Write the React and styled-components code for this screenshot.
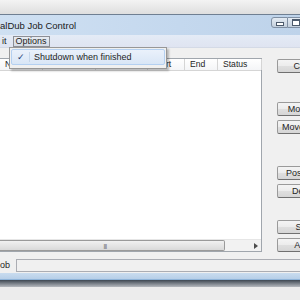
import React from 'react';
import styled, { createGlobalStyle } from 'styled-components';

const GlobalStyle = createGlobalStyle`
  html, body {
    margin: 0;
    padding: 0;
    width: 300px;
    height: 300px;
    overflow: hidden;
    background: #e9e9e9;
  }
  body {
    font-family: "Liberation Sans", Arial, sans-serif;
    font-size: 9px;
    color: #1e1e1e;
  }
`;

const columns = [
  { name: 'Name', width: 43 },
  { name: 'Source', width: 53 },
  { name: 'Dest', width: 52 },
  { name: 'Start', width: 37 },
  { name: 'End', width: 33 },
  { name: 'Status', width: 44 },
];

const buttonGroups = [
  { gap: 0, items: ['Close'] },
  { gap: 29, items: ['Move up', 'Move down'] },
  { gap: 32, items: ['Postpone', 'Delete'] },
  { gap: 22, items: ['Start', 'Abort'] },
];

const App = () => {
  return (
    <Screen>
      <GlobalStyle />
      <Backdrop />
      <Window>
        <TitleBar>
          <Title>alDub Job Control</Title>
          <CaptionButtons>
            <CaptionButton>
              <MinGlyph />
            </CaptionButton>
            <CaptionButton>
              <MaxGlyph />
            </CaptionButton>
          </CaptionButtons>
        </TitleBar>

        <MenuBar>
          <MenuItem>it</MenuItem>
          <MenuItem $open>Options</MenuItem>
          <Dropdown>
            <DropItem>
              <Check>✓</Check>
              <span>Shutdown when finished</span>
            </DropItem>
          </Dropdown>
        </MenuBar>

        <Client>
          <Main>
            <ListView>
              <Header>
                {columns.map((c) => (
                  <HeaderCell key={c.name} $w={c.width}>
                    {c.name}
                  </HeaderCell>
                ))}
              </Header>
              <ListBody />
              <HScroll>
                <Thumb>
                  <Grip>|||</Grip>
                </Thumb>
                <Arrow>
                  <svg width="4" height="6" viewBox="0 0 4 6">
                    <path d="M0 0 L4 3 L0 6 Z" fill="#4d4d4d" />
                  </svg>
                </Arrow>
              </HScroll>
            </ListView>

            <ButtonColumn>
              {buttonGroups.map((g) => (
                <ButtonGroup key={g.items[0]} $gap={g.gap}>
                  {g.items.map((label) => (
                    <PushButton key={label}>{label}</PushButton>
                  ))}
                </ButtonGroup>
              ))}
            </ButtonColumn>
          </Main>

          <StatusRow>
            <StatusLabel>ob</StatusLabel>
            <StatusField />
          </StatusRow>
        </Client>
        <BottomFrame />
      </Window>
      <Shadow />
    </Screen>
  );
};

export default App;

const Screen = styled.div`
  width: 300px;
  height: 300px;
  overflow: hidden;
  display: flex;
  flex-direction: column;
  background: #ececec;
`;

const Backdrop = styled.div`
  height: 14px;
  flex-shrink: 0;
  background: linear-gradient(#f3f3f3, #dedede);
`;

const Window = styled.div`
  display: flex;
  flex-direction: column;
  border-top: 1px solid #6f7f92;
  background: #c8dbee;
`;

const TitleBar = styled.div`
  height: 20px;
  display: flex;
  align-items: flex-start;
  overflow: hidden;
  background: linear-gradient(90deg, #cfe0f2 0%, #c4d8ee 60%, #bed3ea 100%);
`;

const Title = styled.div`
  flex: 1;
  padding-top: 5px;
  font-size: 9.5px;
  color: #1a1a1a;
  white-space: nowrap;
`;

const CaptionButtons = styled.div`
  display: flex;
  margin-top: 2px;
  margin-right: -4px;
`;

const CaptionButton = styled.div`
  width: 15px;
  height: 9px;
  border: 1px solid #7f8fa3;
  border-left-width: 0;
  background: linear-gradient(#e4ebf3, #c3cfdc);
  display: flex;
  align-items: center;
  justify-content: center;
  &:first-child {
    border-left-width: 1px;
    border-radius: 3px 0 0 3px;
  }
`;

const MinGlyph = styled.div`
  width: 6px;
  height: 2px;
  border: 1px solid #4c5a6c;
  background: #fff;
  margin-top: 3px;
`;

const MaxGlyph = styled.div`
  width: 6px;
  height: 4px;
  border: 1px solid #4c5a6c;
  border-top-width: 2px;
  background: #fff;
`;

const MenuBar = styled.div`
  position: relative;
  height: 11px;
  display: flex;
  align-items: stretch;
  gap: 2px;
  padding: 1px 0 0 0;
  background: linear-gradient(#e4ebf6, #dfe4f1);
  border-bottom: 1px solid #d4dae6;
`;

const MenuItem = styled.div`
  display: flex;
  align-items: center;
  padding: 0 2px 0 ${(p) => (p.$open ? '2px' : '1px')};
  margin-left: ${(p) => (p.$open ? '1px' : '0')};
  border: 1px solid ${(p) => (p.$open ? '#8c8f96' : 'transparent')};
  background: ${(p) => (p.$open ? 'linear-gradient(#e8ecf2, #d5dbe5)' : 'transparent')};
  font-size: 9px;
  line-height: 1;
`;

const Dropdown = styled.div`
  position: absolute;
  left: 9px;
  top: 12px;
  width: 154px;
  height: 18px;
  padding: 1px;
  border: 1px solid #979797;
  background: #f0f0f0;
  box-shadow: 2px 2px 2px rgba(0, 0, 0, 0.25);
  z-index: 5;
`;

const DropItem = styled.div`
  height: 16px;
  display: flex;
  align-items: center;
  border: 1px solid #b4d0f1;
  border-radius: 2px;
  box-sizing: border-box;
  background: linear-gradient(#eaf1fb, #d9e6f6);
  font-size: 9px;
`;

const Check = styled.span`
  width: 18px;
  padding-left: 5px;
  box-sizing: border-box;
  color: #1d3a72;
  font-family: "DejaVu Sans", sans-serif;
  font-size: 9px;
  margin-right: 4px;
  border-right: 1px solid #c5d6ea;
`;

const Client = styled.div`
  display: flex;
  flex-direction: column;
  background: #f0f0f0;
  padding-top: 10px;
  overflow: hidden;
`;

const Main = styled.div`
  display: flex;
  align-items: flex-start;
  overflow: hidden;
`;

const ListView = styled.div`
  width: 262px;
  height: 194px;
  flex-shrink: 0;
  box-sizing: border-box;
  display: flex;
  flex-direction: column;
  background: #fff;
  border: 1px solid #a0a6ad;
  border-left: none;
`;

const Header = styled.div`
  height: 11px;
  display: flex;
  border-bottom: 1px solid #d5d5d5;
  background: linear-gradient(#ffffff, #f4f5f7);
`;

const HeaderCell = styled.div`
  width: ${(p) => p.$w}px;
  flex-shrink: 0;
  box-sizing: border-box;
  padding-left: 5px;
  border-right: 1px solid #d5d5d5;
  font-size: 8.6px;
  line-height: 11px;
  white-space: nowrap;
  overflow: hidden;
`;

const ListBody = styled.div`
  flex: 1;
`;

const HScroll = styled.div`
  height: 11px;
  display: flex;
  align-items: stretch;
  background: #f2f2f2;
  border-top: 1px solid #e6e6e6;
`;

const Thumb = styled.div`
  width: 225px;
  box-sizing: border-box;
  border: 1px solid #9a9a9a;
  border-left: none;
  border-radius: 0 2px 2px 0;
  background: linear-gradient(#f1f1f1, #d9d9d9);
  display: flex;
  align-items: center;
  justify-content: center;
`;

const Grip = styled.span`
  font-size: 6px;
  letter-spacing: -0.5px;
  color: #555;
  margin-left: -14px;
`;

const Arrow = styled.div`
  flex: 1;
  display: flex;
  align-items: center;
  justify-content: flex-end;
  padding-right: 3px;
`;

const ButtonColumn = styled.div`
  margin-left: 15px;
  display: flex;
  flex-direction: column;
  flex-shrink: 0;
  width: 56px;
  margin-top: 1px;
`;

const ButtonGroup = styled.div`
  display: flex;
  flex-direction: column;
  gap: 4px;
  margin-top: ${(p) => p.$gap}px;
`;

const PushButton = styled.div`
  height: 14px;
  box-sizing: border-box;
  border: 1px solid #9a9a9a;
  border-bottom-color: #707070;
  border-radius: 2px;
  background: linear-gradient(#f4f4f4 0%, #ececec 50%, #dfdfdf 51%, #d6d6d6 100%);
  display: flex;
  align-items: center;
  justify-content: center;
  font-size: 9px;
  white-space: nowrap;
`;

const StatusRow = styled.div`
  display: flex;
  align-items: center;
  margin-top: 6px;
  height: 14px;
  margin-bottom: 1px;
`;

const StatusLabel = styled.div`
  width: 16px;
  font-size: 9px;
`;

const StatusField = styled.div`
  flex: 1;
  height: 13px;
  box-sizing: border-box;
  border: 1px solid #abadb3;
  border-right: none;
  background: #f0f0f0;
`;

const BottomFrame = styled.div`
  height: 6px;
  background: linear-gradient(#c9dcef, #b7cfe8);
  border-bottom: 1px solid #8fb4d9;
`;

const Shadow = styled.div`
  height: 7px;
  background: linear-gradient(#3d4651, #b5b9be);
`;
